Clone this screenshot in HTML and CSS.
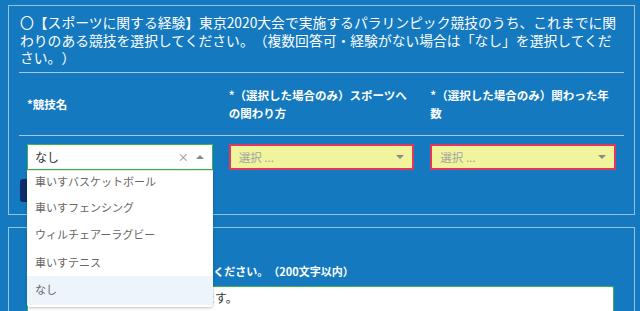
FILE: index.html
```html
<!DOCTYPE html>
<html lang="ja">
<head>
<meta charset="utf-8">
<title>スポーツに関する経験</title>
<link rel="stylesheet" href="styles.css">
</head>
<body>
<div class="page">
  <section class="panel panel-q">
    <p class="q-title">〇【スポーツに関する経験】東京2020大会で実施するパラリンピック競技のうち、これまでに関わりのある競技を選択してください。（複数回答可・経験がない場合は「なし」を選択してください。）</p>
    <div class="grid-head">
      <div class="col-label">*競技名</div>
      <div class="col-label">*（選択した場合のみ）スポーツへの関わり方</div>
      <div class="col-label">*（選択した場合のみ）関わった年数</div>
    </div>
    <div class="grid-row">
      <div class="cell">
        <div class="combo">
          <div class="combo-box is-valid is-open">
            <span class="combo-value">なし</span>
            <span class="combo-clear">×</span>
            <span class="caret caret-up"></span>
          </div>
          <ul class="combo-menu">
            <li class="combo-item">車いすバスケットボール</li>
            <li class="combo-item">車いすフェンシング</li>
            <li class="combo-item">ウィルチェアーラグビー</li>
            <li class="combo-item">車いすテニス</li>
            <li class="combo-item is-active">なし</li>
          </ul>
        </div>
      </div>
      <div class="cell">
        <div class="combo-box is-invalid">
          <span class="combo-placeholder">選択 ...</span>
          <span class="caret caret-down"></span>
        </div>
      </div>
      <div class="cell">
        <div class="combo-box is-invalid">
          <span class="combo-placeholder">選択 ...</span>
          <span class="caret caret-down"></span>
        </div>
      </div>
    </div>
    <button class="add-btn" type="button">行を追加</button>
  </section>
  <section class="panel panel-free">
    <p class="free-label">競技への関わり方を具体的に記入してください。（200文字以内）</p>
    <div class="free-text">大会の運営に参加した事があります。</div>
  </section>
</div>
</body>
</html>
```

FILE: styles.css
```css
html, body {
  margin: 0;
  padding: 0;
}
body {
  background: #1479bf;
  font-family: "Noto Sans CJK JP", "Noto Sans", sans-serif;
  color: #ffffff;
  height: 311px;
  overflow: hidden;
  text-spacing-trim: space-all;
}
.page {
  padding: 5px 5px 0 8px;
}
.panel {
  border: 1px solid rgba(255, 255, 255, 0.55);
  padding: 8px 10px 12px 10px;
}
.panel-free {
  margin-top: 12px;
  padding-top: 34px;
}
.q-title {
  margin: 0 0 0 1px;
  font-size: 13.8px;
  line-height: 17.5px;
}
.grid-head {
  margin-top: 5px;
  display: grid;
  grid-template-columns: repeat(3, 1fr);
  border-top: 1px solid rgba(255, 255, 255, 0.6);
  border-bottom: 1px solid rgba(255, 255, 255, 0.6);
}
.col-label {
  padding: 13px 8px;
  display: flex;
  align-items: center;
  font-size: 11.5px;
  line-height: 18px;
  font-weight: bold;
}
.grid-row {
  display: grid;
  grid-template-columns: repeat(3, 1fr);
  padding-top: 8px;
}
.cell {
  padding: 0 8px;
}
.combo {
  position: relative;
}
.combo-box {
  box-sizing: border-box;
  height: 26px;
  display: flex;
  align-items: center;
  padding: 0 8px 0 7px;
  background: #ffffff;
  color: #333333;
}
.combo-box.is-valid {
  border: 1.5px solid #3cb449;
}
.combo-box.is-invalid {
  border: 2px solid #e2355f;
  background: #f0f49c;
}
.combo-value {
  flex: 1;
  font-size: 12px;
}
.combo-placeholder {
  flex: 1;
  font-size: 11.5px;
  color: #a3a3a3;
  padding-left: 1px;
}
.combo-clear {
  font-size: 11px;
  color: #8a8a8a;
  margin-right: 7px;
}
.caret {
  width: 0;
  height: 0;
  border-left: 4px solid transparent;
  border-right: 4px solid transparent;
}
.caret-up {
  border-bottom: 4px solid #8a8a8a;
}
.caret-down {
  border-top: 4px solid #8a8a8a;
}
.combo-menu {
  position: absolute;
  top: 100%;
  left: 0;
  right: 0;
  margin: 0;
  padding: 0 0 2px;
  list-style: none;
  background: #ffffff;
  border-top: 1px solid #e6e6e6;
  border-radius: 0 0 3px 3px;
  box-shadow: 0 1px 3px rgba(0, 0, 0, 0.25);
  z-index: 5;
}
.combo-item {
  height: 27.5px;
  line-height: 27.5px;
  padding: 0 8px;
  font-size: 11px;
  color: #666666;
}
.combo-item:first-child {
  height: 23px;
  line-height: 20px;
}
.combo-item.is-active {
  background: #eef4fb;
  height: 29px;
  line-height: 27px;
}
.add-btn {
  display: block;
  margin: 9px 0 0 1px;
  width: 90px;
  height: 23px;
  border: 0;
  border-radius: 3px;
  background: #0c2c6c;
  color: #ffffff;
  font-family: inherit;
  font-size: 12px;
}
.free-label {
  margin: 0;
  padding: 0 8px;
  font-size: 11px;
  line-height: 18px;
  font-weight: bold;
}
.free-text {
  box-sizing: border-box;
  margin: 6px 10px 0 8px;
  height: 60px;
  border: 1.5px solid #3cb449;
  border-radius: 2px;
  background: #ffffff;
  color: #333333;
  font-size: 12px;
  line-height: 18px;
  padding: 2px 7px;
}
```
